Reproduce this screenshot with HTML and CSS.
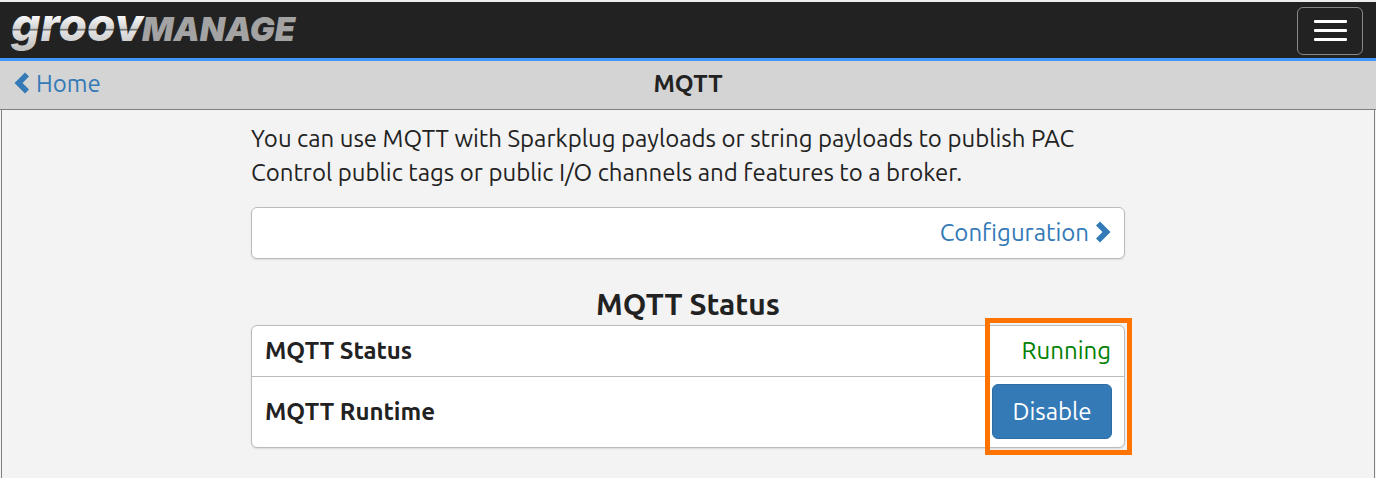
FILE: index.html
```html
<!DOCTYPE html>
<html lang="en">
<head>
    <meta charset="UTF-8">
    <meta name="viewport" content="width=device-width, initial-scale=1.0">
    <title>groov Manage - MQTT</title>
    <link rel="stylesheet" href="styles.css">
</head>
<body>
    <header class="navbar">
        <a class="brand" href="#" aria-label="groov Manage">
            <svg class="logo" width="310" height="56" viewBox="0 0 310 56">
                <defs>
                    <linearGradient id="metal" gradientUnits="userSpaceOnUse" x1="0" y1="12" x2="0" y2="48">
                        <stop offset="0" stop-color="#ffffff"/>
                        <stop offset="0.4" stop-color="#d2d2d2"/>
                        <stop offset="0.42" stop-color="#777777"/>
                        <stop offset="0.45" stop-color="#777777"/>
                        <stop offset="0.47" stop-color="#e2e2e2"/>
                        <stop offset="1" stop-color="#c0c0c0"/>
                    </linearGradient>
                </defs>
                <text class="logo-groov" x="11" y="39" fill="url(#metal)">groov</text>
                <text class="logo-manage" x="142" y="39">MANAGE</text>
            </svg>
        </a>
        <button class="menu-toggle" type="button" aria-label="Toggle navigation">
            <span class="icon-bar"></span>
            <span class="icon-bar"></span>
            <span class="icon-bar"></span>
        </button>
    </header>

    <nav class="titlebar">
        <a class="link" href="#">
            <svg class="chevron" viewBox="0 0 16 22"><path d="M11 0.500 15 4.500 8.500 11 15 17.500 11 21.500 0.500 11z"/></svg>
            <span>Home</span>
        </a>
        <h1 class="page-title">MQTT</h1>
    </nav>

    <main class="content">
        <div class="container">
            <p class="intro">You can use MQTT with Sparkplug payloads or string payloads to publish PAC Control public tags or public I/O channels and features to a broker.</p>

            <div class="panel">
                <div class="row row-end">
                    <a class="link" href="#">
                        <span>Configuration</span>
                        <svg class="chevron" viewBox="0 0 16 22"><path d="M5 0.500 1 4.500 7.500 11 1 17.500 5 21.500 15.500 11z"/></svg>
                    </a>
                </div>
            </div>

            <h2 class="section-title">MQTT Status</h2>
            <div class="panel">
                <div class="row">
                    <strong>MQTT Status</strong>
                    <span class="running">Running</span>
                </div>
                <div class="row row-action">
                    <strong id="runtime-label">MQTT Runtime</strong>
                    <button class="btn" type="button" aria-describedby="runtime-label">Disable</button>
                </div>
                <div class="highlight"></div>
            </div>
        </div>
    </main>
</body>
</html>
```
FILE: styles.css
```css
* {
    box-sizing: border-box;
}

body {
    margin: 0;
    min-height: 100vh;
    display: flex;
    flex-direction: column;
    background-color: #f3f3f3;
    color: #222;
    font-family: Ubuntu, "Noto Sans", sans-serif;
    font-size: 24px;
    line-height: 34px;
}

/* Header */
.navbar {
    display: flex;
    justify-content: space-between;
    align-items: flex-start;
    padding-right: 13px;
    background-color: #222;
    border-top: 2px solid #eee;
    border-bottom: 3px solid #3f97ff;
}

.brand,
.logo {
    display: block;
}

.logo text {
    font-family: Inter, sans-serif;
    font-weight: 800;
    font-style: italic;
}

.logo-groov {
    font-size: 46px;
}

.logo .logo-manage {
    font-size: 33px;
    font-weight: 900;
    fill: #a3a3a3;
}

.menu-toggle {
    display: flex;
    flex-direction: column;
    align-items: center;
    justify-content: center;
    gap: 6px;
    width: 66px;
    height: 48px;
    margin-top: 5px;
    padding: 0 0 2px;
    background: none;
    border: 1px solid #888;
    border-radius: 6px;
    cursor: pointer;
}

.icon-bar {
    width: 33px;
    height: 3px;
    border-radius: 1px;
    background-color: #fff;
}

/* Title bar */
.titlebar {
    display: grid;
    grid-template-columns: 1fr auto 1fr;
    align-items: center;
    padding: 6px 14px 8px;
    background-color: #d4d4d4;
    border-bottom: 1px solid #808080;
}

.page-title {
    margin: 0;
    font-size: 24px;
}

.link {
    display: flex;
    align-items: center;
    gap: 6px;
    color: #337ab7;
    text-decoration: none;
}

.chevron {
    width: 16px;
    height: 22px;
    margin-bottom: 2px;
    fill: currentColor;
}

/* Content */
.content {
    flex: 1;
    margin: 0 1px;
    padding: 12px 16px;
    border: solid #808080;
    border-width: 0 1px;
}

.container {
    max-width: 874px;
    margin: 0 auto;
}

.intro {
    margin: 0 0 17px;
}

.panel {
    position: relative;
    background-color: #fff;
    border: 1px solid #bbb;
    border-radius: 6px;
    box-shadow: 0 1px 2px rgba(0, 0, 0, 0.1);
}

.row {
    display: flex;
    justify-content: space-between;
    align-items: center;
    padding: 8px 13px;
}

.row + .row {
    border-top: 1px solid #bbb;
}

.row-end {
    justify-content: flex-end;
}

.row-action {
    padding: 7px 12px 8px 13px;
}

.section-title {
    margin: 25px 0 1px;
    font-size: 30px;
    line-height: 40px;
    text-align: center;
}

.running {
    color: #008000;
}

.btn {
    width: 120px;
    height: 55px;
    padding: 0;
    background-color: #337ab7;
    border: 1px solid #2e6da4;
    border-radius: 6px;
    color: #fff;
    font: inherit;
    cursor: pointer;
}

/* Callout around the status column */
.highlight {
    position: absolute;
    top: -8px;
    right: -8px;
    bottom: -8px;
    width: 147px;
    border: 5px solid #ff7300;
    pointer-events: none;
}
```
